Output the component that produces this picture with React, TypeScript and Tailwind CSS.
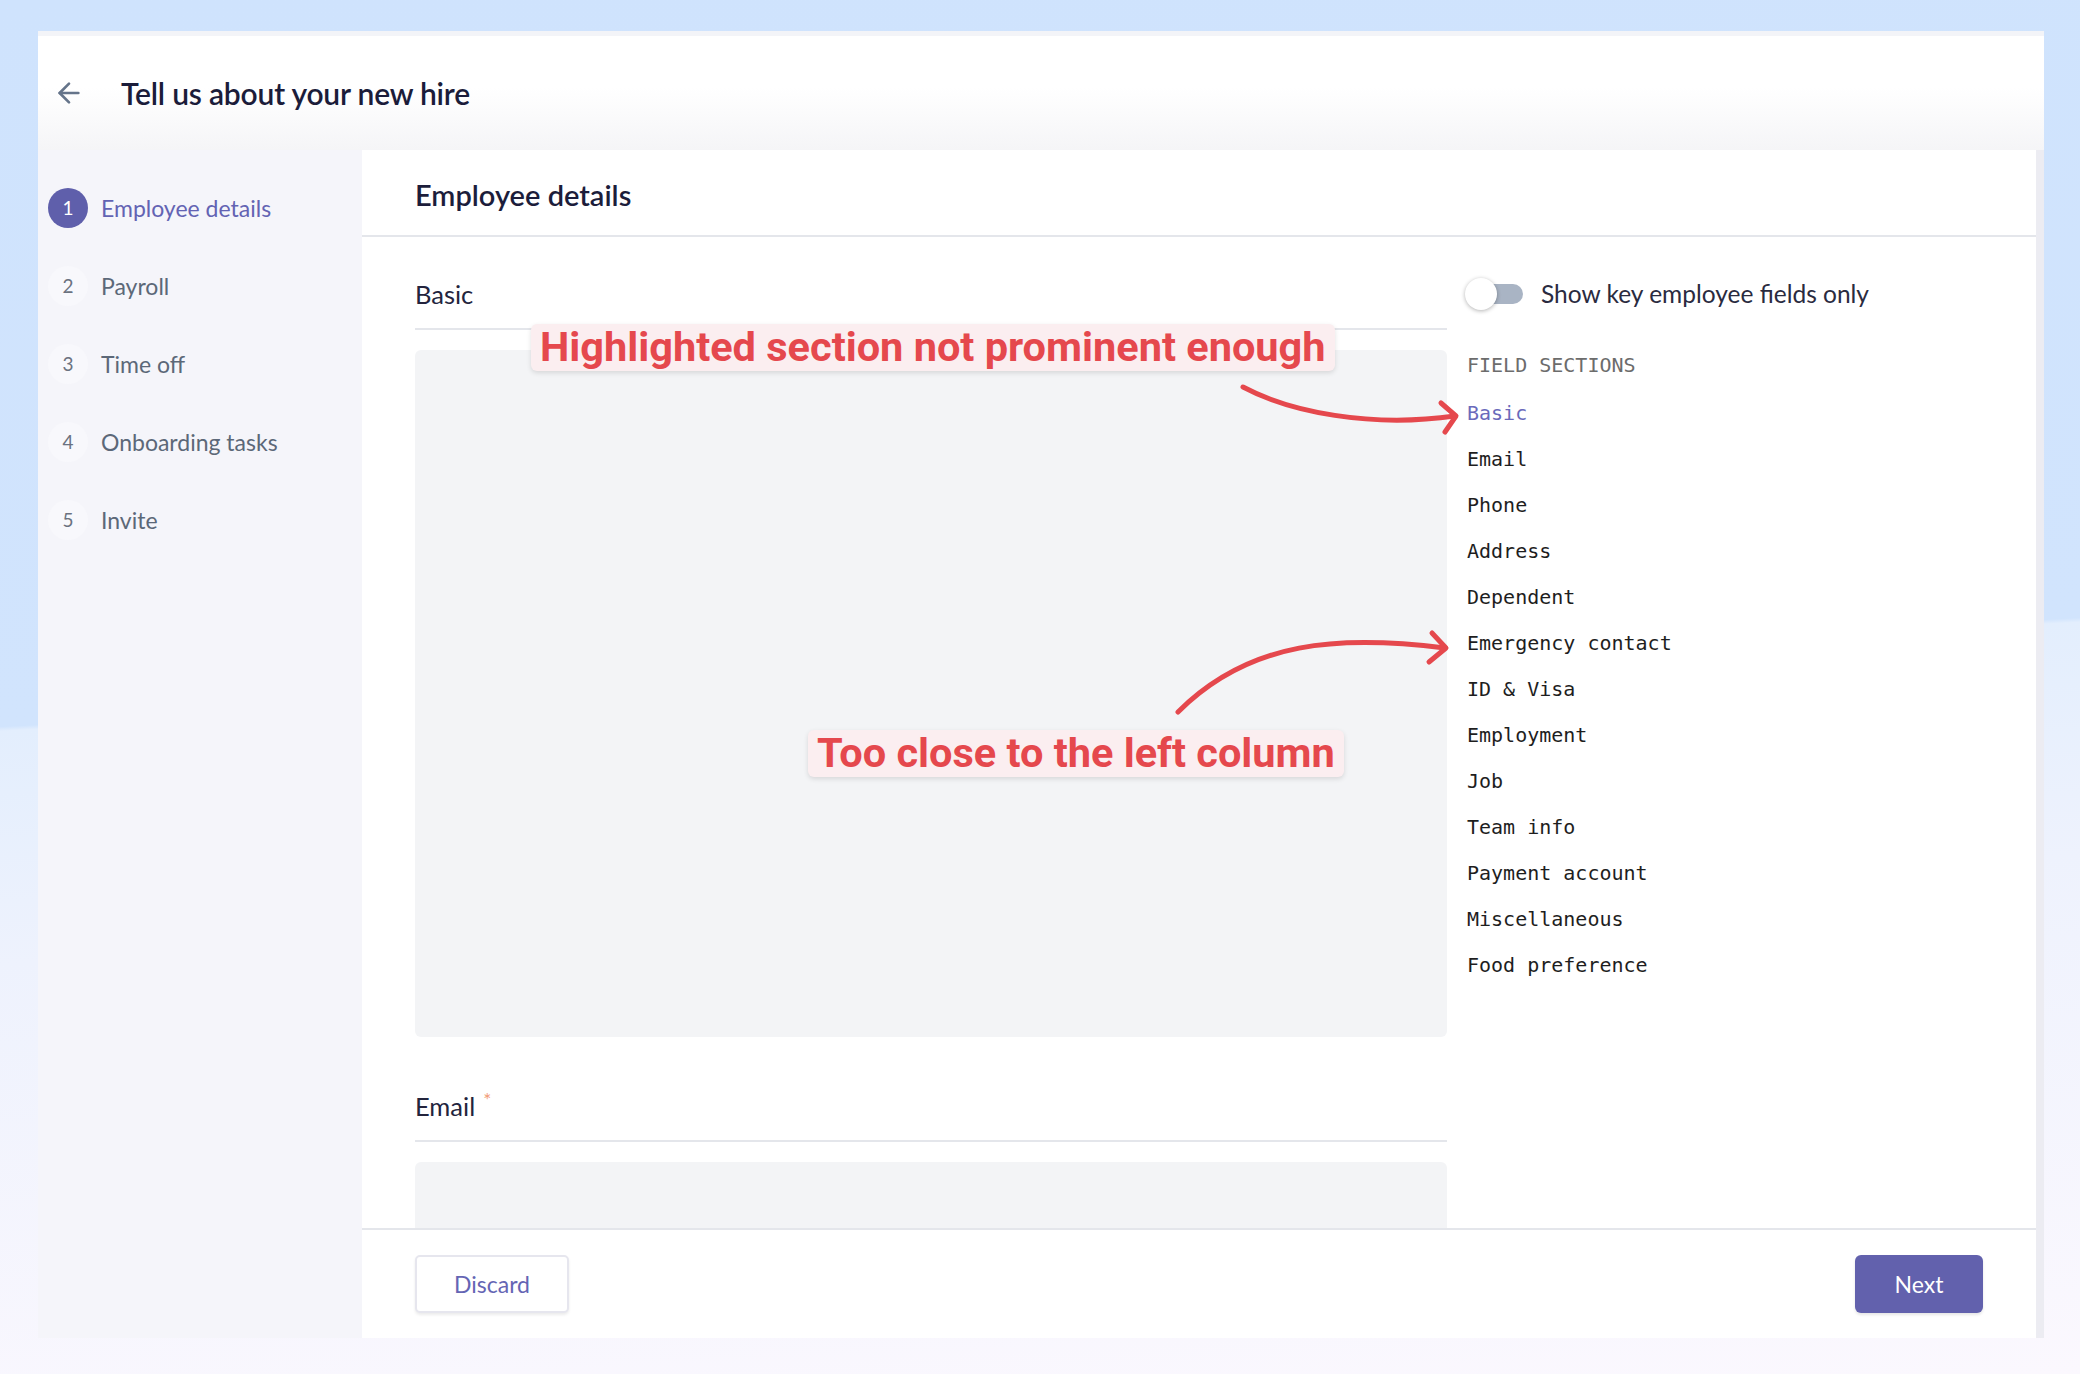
import { ArrowLeft } from 'lucide-react';

const steps = ['Employee details', 'Payroll', 'Time off', 'Onboarding tasks', 'Invite'];

const fieldSections = [
  'Basic',
  'Email',
  'Phone',
  'Address',
  'Dependent',
  'Emergency contact',
  'ID & Visa',
  'Employment',
  'Job',
  'Team info',
  'Payment account',
  'Miscellaneous',
  'Food preference',
];

function FieldBlock({ label, required, boxHeight }: { label: string; required?: boolean; boxHeight: string }) {
  return (
    <div>
      <div className="box-content flex h-[36px] items-center border-b-2 border-[#e4e6eb] pb-[16px] text-[25.5px] text-[#23243d]">
        {label}
        {required && <span className="-mt-[12px] ml-[8px] text-[19px] text-[#f29b76]">*</span>}
      </div>
      <div className={`mt-[20px] rounded-[6px] bg-[#f3f4f6] ${boxHeight}`} />
    </div>
  );
}

export default function App() {
  return (
    <div className="relative h-[1374px] w-[2080px] overflow-hidden bg-[linear-gradient(177deg,#cfe3fd_0%,#d1e4fd_49%,#e3eefd_49.3%,#eef2fd_65%,#fbf8fe_100%)] pb-[36px] pl-[38px] pr-[36px] pt-[31px] font-['Lato',sans-serif]">
      <div className="flex h-full flex-col">
        {/* Top bar */}
        <header className="flex h-[119px] shrink-0 items-center gap-[36px] border-t-[5px] border-[#f3f4f8] bg-[linear-gradient(to_bottom,#ffffff_45%,#f5f5f7)] pl-[15px]">
          <ArrowLeft size={32} strokeWidth={2} className="text-[#65748a]" />
          <h1 className="text-[30px] font-semibold tracking-[-0.2px] text-[#1b1c3a]">Tell us about your new hire</h1>
        </header>

        <div className="flex min-h-0 flex-1">
          {/* Steps */}
          <aside className="w-[324px] shrink-0 bg-[#f5f5fa] pl-[10px] pt-[19px]">
            {steps.map((step, i) => (
              <div key={step} className="flex h-[78px] items-center gap-[13px]">
                <span
                  className={
                    i === 0
                      ? 'flex h-[40px] w-[40px] items-center justify-center rounded-full bg-[#5f5fab] text-[19px] text-white'
                      : 'flex h-[40px] w-[40px] items-center justify-center rounded-full bg-[#f8f8fc] text-[19px] text-[#6b7280]'
                  }
                >
                  {i + 1}
                </span>
                <span className={i === 0 ? 'text-[23px] text-[#6363b3]' : 'text-[23px] text-[#5c6878]'}>{step}</span>
              </div>
            ))}
          </aside>

          {/* Form */}
          <main className="flex min-w-0 flex-1 flex-col bg-white">
            <div className="flex h-[87px] shrink-0 items-center border-b-2 border-[#e4e6eb] pl-[53px] pt-[4px]">
              <h2 className="text-[29px] font-semibold text-[#1c1d3b]">Employee details</h2>
            </div>

            <div className="flex min-h-0 flex-1 gap-[20px] overflow-hidden px-[53px] pt-[39px]">
              <div className="flex w-[1032px] shrink-0 flex-col gap-[51px]">
                <FieldBlock label="Basic" boxHeight="h-[687px]" />
                <FieldBlock label="Email" required boxHeight="h-[200px]" />
              </div>

              <div className="flex-1">
                <div className="flex h-[36px] items-center gap-[18px]">
                  <button className="relative flex h-[20px] w-[56px] items-center rounded-full bg-[#a9b4c4]">
                    <span className="absolute -left-[2px] h-[32px] w-[32px] rounded-full bg-white shadow-[0_1px_4px_rgba(0,0,0,0.3)]" />
                  </button>
                  <span className="text-[24.5px] text-[#2a2b3f]">Show key employee fields only</span>
                </div>
                <div className="mt-[39px] font-['DejaVu_Sans_Mono',monospace] text-[20px] leading-[28px] text-[#6c6c6c]">
                  FIELD SECTIONS
                </div>
                <ul className="mt-[11px] font-['DejaVu_Sans_Mono',monospace] text-[20px]">
                  {fieldSections.map((s, i) => (
                    <li
                      key={s}
                      className={i === 0 ? 'flex h-[46px] items-center text-[#6a6abb]' : 'flex h-[46px] items-center text-[#1e1e1e]'}
                    >
                      {s}
                    </li>
                  ))}
                </ul>
              </div>
            </div>

            <footer className="flex h-[110px] shrink-0 items-center justify-between border-t-2 border-[#e4e6eb] px-[53px]">
              <button className="h-[58px] w-[154px] rounded-[5px] border-2 border-[#e6e6ee] bg-white text-[23px] text-[#6565b4] shadow-[0_2px_3px_rgba(0,0,0,0.08)]">
                Discard
              </button>
              <button className="h-[58px] w-[128px] rounded-[6px] bg-[#6261ad] text-[23px] text-white shadow-[0_2px_3px_rgba(0,0,0,0.1)]">
                Next
              </button>
            </footer>
          </main>

          <div className="w-[8px] shrink-0 bg-[#ececf2]" />
        </div>
      </div>

      {/* Review notes drawn on top */}
      <svg className="pointer-events-none absolute left-0 top-0" width="2080" height="1374" viewBox="0 0 2080 1374" fill="none">
        <g stroke="#e5484d" strokeWidth="5" strokeLinecap="round" strokeLinejoin="round">
          <path d="M1243 387 C1290 412 1370 428 1455 416" />
          <path d="M1441 403 L1456 416 L1445 432" />
          <path d="M1178 712 C1250 640 1340 635 1445 648" />
          <path d="M1432 633 L1446 648 L1429 662" />
        </g>
      </svg>
      <div className="absolute left-[531px] top-[324px] flex h-[47px] items-center rounded-[6px] bg-[#fbeef0] px-[9px] font-['Roboto',sans-serif] text-[41.5px] font-bold text-[#e5484d] shadow-[0_2px_5px_rgba(0,0,0,0.12)]">
        Highlighted section not prominent enough
      </div>
      <div className="absolute left-[808px] top-[730px] flex h-[47px] items-center rounded-[6px] bg-[#fbeef0] px-[9px] font-['Roboto',sans-serif] text-[41.5px] font-bold text-[#e5484d] shadow-[0_2px_5px_rgba(0,0,0,0.12)]">
        Too close to the left column
      </div>
    </div>
  );
}
